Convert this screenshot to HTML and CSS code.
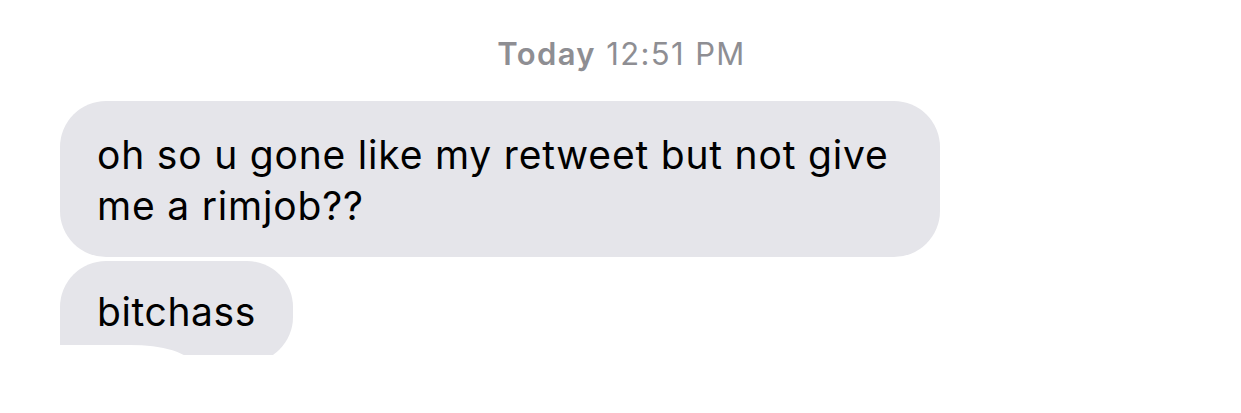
FILE: index.html
```html
<!DOCTYPE html>
<html lang="en">
<head>
    <meta charset="UTF-8">
    <title>Messages</title>
    <link rel="stylesheet" href="styles.css">
</head>
<body>
    <div class="thread">
        <div class="stamp"><b>Today</b> 12:51 PM</div>
        <div class="messages">
            <div class="bubble">oh so u gone like my retweet but not give me a rimjob??</div>
            <div class="bubble last">bitchass</div>
        </div>
    </div>
</body>
</html>
```

FILE: styles.css
```css
body {
    margin: 0;
    background-color: #fff;
    font-family: Inter, "Noto Sans", sans-serif;
}
.thread {
    height: 355px;
    overflow: hidden;
    padding-top: 32px;
    box-sizing: border-box;
}
.stamp {
    text-align: center;
    color: #8e8e93;
    font-size: 31px;
    line-height: 44px;
    letter-spacing: 1.4px;
    padding-left: 2px;
}
.stamp b {
    font-weight: 600;
}
.messages {
    display: flex;
    flex-direction: column;
    align-items: flex-start;
    gap: 4px;
    padding-left: 60px;
    margin-top: 25px;
}
.bubble {
    background-color: #e5e5ea;
    color: #000;
    font-size: 39px;
    line-height: 51px;
    letter-spacing: 0.8px;
    padding: 28px 37px 26px;
    border-radius: 46px;
    width: 806px;
    max-width: 806px;
    position: relative;
}
.bubble.last {
    width: auto;
    padding: 25px 37px 26px;
    border-bottom-left-radius: 0;
    letter-spacing: 0.6px;
}
/* tail cut-out under the last bubble */
.bubble.last::after {
    content: "";
    position: absolute;
    left: 0;
    bottom: 0;
    width: 130px;
    height: 18px;
    background-color: #fff;
    border-top-right-radius: 60px 18px;
}
```
